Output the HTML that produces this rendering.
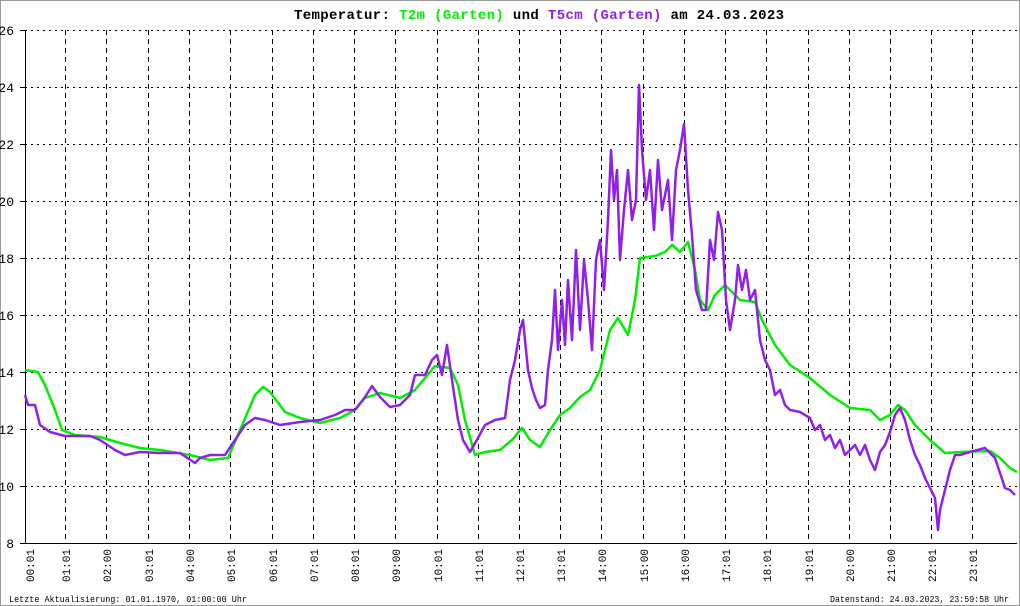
<!DOCTYPE html>
<html><head><meta charset="utf-8"><style>
html,body{margin:0;padding:0;background:#fff;}
svg{display:block}
text{font-family:"Liberation Mono","DejaVu Sans Mono",monospace;}
</style></head><body>
<svg width="1020" height="606" viewBox="0 0 1020 606" xmlns="http://www.w3.org/2000/svg">
<rect x="0.5" y="0.5" width="1019" height="605" fill="#fff" stroke="#999" stroke-width="1"/>
<text x="294" y="19" font-size="14" font-weight="bold" fill="#000" textLength="490" lengthAdjust="spacing">Temperatur: <tspan fill="#00ee00">T2m (Garten)</tspan> und <tspan fill="#9020e8">T5cm (Garten)</tspan> am 24.03.2023</text>
<g stroke="#000" stroke-width="1" fill="none">
<path d="M25 30.5H1017M25 87.5H1017M25 144.5H1017M25 201.5H1017M25 258.5H1017M25 315.5H1017M25 372.5H1017M25 429.5H1017M25 486.5H1017" stroke-dasharray="2,4"/>
</g>
<g stroke="#000" stroke-width="1" stroke-dasharray="5,4" fill="none">
<path d="M65.5 30V543M106.5 30V543M148.5 30V543M189.5 30V543M230.5 30V543M272.5 30V543M313.5 30V543M354.5 30V543M395.5 30V543M437.5 30V543M478.5 30V543M519.5 30V543M560.5 30V543M601.5 30V543M643.5 30V543M684.5 30V543M725.5 30V543M766.5 30V543M808.5 30V543M849.5 30V543M890.5 30V543M931.5 30V543M972.5 30V543"/>
</g>
<path d="M25.5 30V543.5H1017M20 30.5H25M20 87.5H25M20 144.5H25M20 201.5H25M20 258.5H25M20 315.5H25M20 372.5H25M20 429.5H25M20 486.5H25M20 543.5H25" stroke="#000" fill="none"/>
<g font-size="13" fill="#000" text-anchor="end">
<text x="14" y="35">26</text><text x="14" y="92">24</text><text x="14" y="149">22</text><text x="14" y="206">20</text><text x="14" y="263">18</text><text x="14" y="320">16</text><text x="14" y="377">14</text><text x="14" y="434">12</text><text x="14" y="491">10</text><text x="14" y="548">8</text>
</g>
<g font-size="11" fill="#000" text-anchor="end">
<text transform="translate(34,549) rotate(-90)">00:01</text>
<text transform="translate(70,549) rotate(-90)">01:01</text>
<text transform="translate(111,549) rotate(-90)">02:00</text>
<text transform="translate(153,549) rotate(-90)">03:01</text>
<text transform="translate(194,549) rotate(-90)">04:00</text>
<text transform="translate(235,549) rotate(-90)">05:01</text>
<text transform="translate(277,549) rotate(-90)">06:01</text>
<text transform="translate(318,549) rotate(-90)">07:01</text>
<text transform="translate(359,549) rotate(-90)">08:01</text>
<text transform="translate(400,549) rotate(-90)">09:00</text>
<text transform="translate(442,549) rotate(-90)">10:01</text>
<text transform="translate(483,549) rotate(-90)">11:01</text>
<text transform="translate(524,549) rotate(-90)">12:01</text>
<text transform="translate(565,549) rotate(-90)">13:01</text>
<text transform="translate(606,549) rotate(-90)">14:00</text>
<text transform="translate(648,549) rotate(-90)">15:00</text>
<text transform="translate(689,549) rotate(-90)">16:00</text>
<text transform="translate(730,549) rotate(-90)">17:01</text>
<text transform="translate(771,549) rotate(-90)">18:01</text>
<text transform="translate(813,549) rotate(-90)">19:01</text>
<text transform="translate(854,549) rotate(-90)">20:00</text>
<text transform="translate(895,549) rotate(-90)">21:00</text>
<text transform="translate(936,549) rotate(-90)">22:01</text>
<text transform="translate(977,549) rotate(-90)">23:01</text>
</g>
<text x="9" y="602" font-size="9" fill="#000" textLength="238" lengthAdjust="spacingAndGlyphs">Letzte Aktualisierung: 01.01.1970, 01:00:00 Uhr</text>
<text x="830" y="602" font-size="9" fill="#000" textLength="179" lengthAdjust="spacingAndGlyphs">Datenstand: 24.03.2023, 23:59:58 Uhr</text>
<polyline fill="none" stroke="#00ee00" stroke-width="2.5" stroke-linejoin="round" points="25,370 38,372 45,385 55,410 62,430 75,435 100,437 120,443 140,448 160,450 190,455 210,460 228,458 240,430 255,395 263,387 270,392 285,412 300,418 320,423 340,418 355,410 365,398 380,393 400,398 415,390 425,378 435,366 450,368 458,385 465,420 475,455 485,452 500,450 512,440 522,428 530,440 540,447 550,430 560,415 570,408 580,397 590,390 600,370 610,330 618,318 628,335 635,300 640,258 655,256 665,252 672,245 680,252 688,242 695,270 700,300 708,310 715,295 725,285 740,300 755,302 762,320 775,345 790,365 810,378 830,395 850,408 870,410 880,420 890,415 898,405 905,410 915,425 930,440 945,453 960,452 990,451 1000,458 1010,468 1017,472"/>
<polyline fill="none" stroke="#9020e8" stroke-width="2.5" stroke-linejoin="round" points="25,395 28,405 35,405 40,425 50,432 65,436 90,436 100,440 115,450 125,455 140,452 160,453 180,453 195,463 200,458 210,455 225,455 235,440 245,425 255,418 265,420 280,425 300,422 320,420 335,415 345,410 355,410 365,397 372,386 380,397 390,407 400,405 410,395 415,375 425,375 432,360 437,355 442,375 447,345 452,380 458,420 463,440 470,452 478,438 485,425 495,420 505,418 510,380 515,360 520,330 523,320 528,370 532,388 536,400 540,408 545,405 548,370 552,340 555,290 558,350 562,300 565,345 568,280 572,340 576,250 580,330 584,260 588,300 592,350 596,260 600,240 604,290 608,220 611,150 614,200 617,170 620,260 624,210 628,170 632,220 636,200 639,85 642,150 646,200 650,170 654,230 658,160 662,210 668,180 672,240 676,170 680,150 684,124 688,190 692,235 696,290 702,310 706,310 710,240 714,260 718,212 722,230 726,300 730,330 735,300 738,265 742,290 746,270 750,300 755,290 760,340 765,360 770,370 775,395 780,390 785,405 790,410 800,412 810,418 815,430 820,425 825,440 830,435 835,448 840,440 845,455 850,450 855,445 860,455 865,445 870,460 875,470 880,452 885,445 890,432 895,415 900,408 905,420 910,440 915,455 920,465 925,478 930,488 935,498 938,530 940,510 945,490 950,470 955,455 960,455 970,452 985,448 995,458 1005,488 1010,490 1015,495"/>
</svg>
</body></html>
